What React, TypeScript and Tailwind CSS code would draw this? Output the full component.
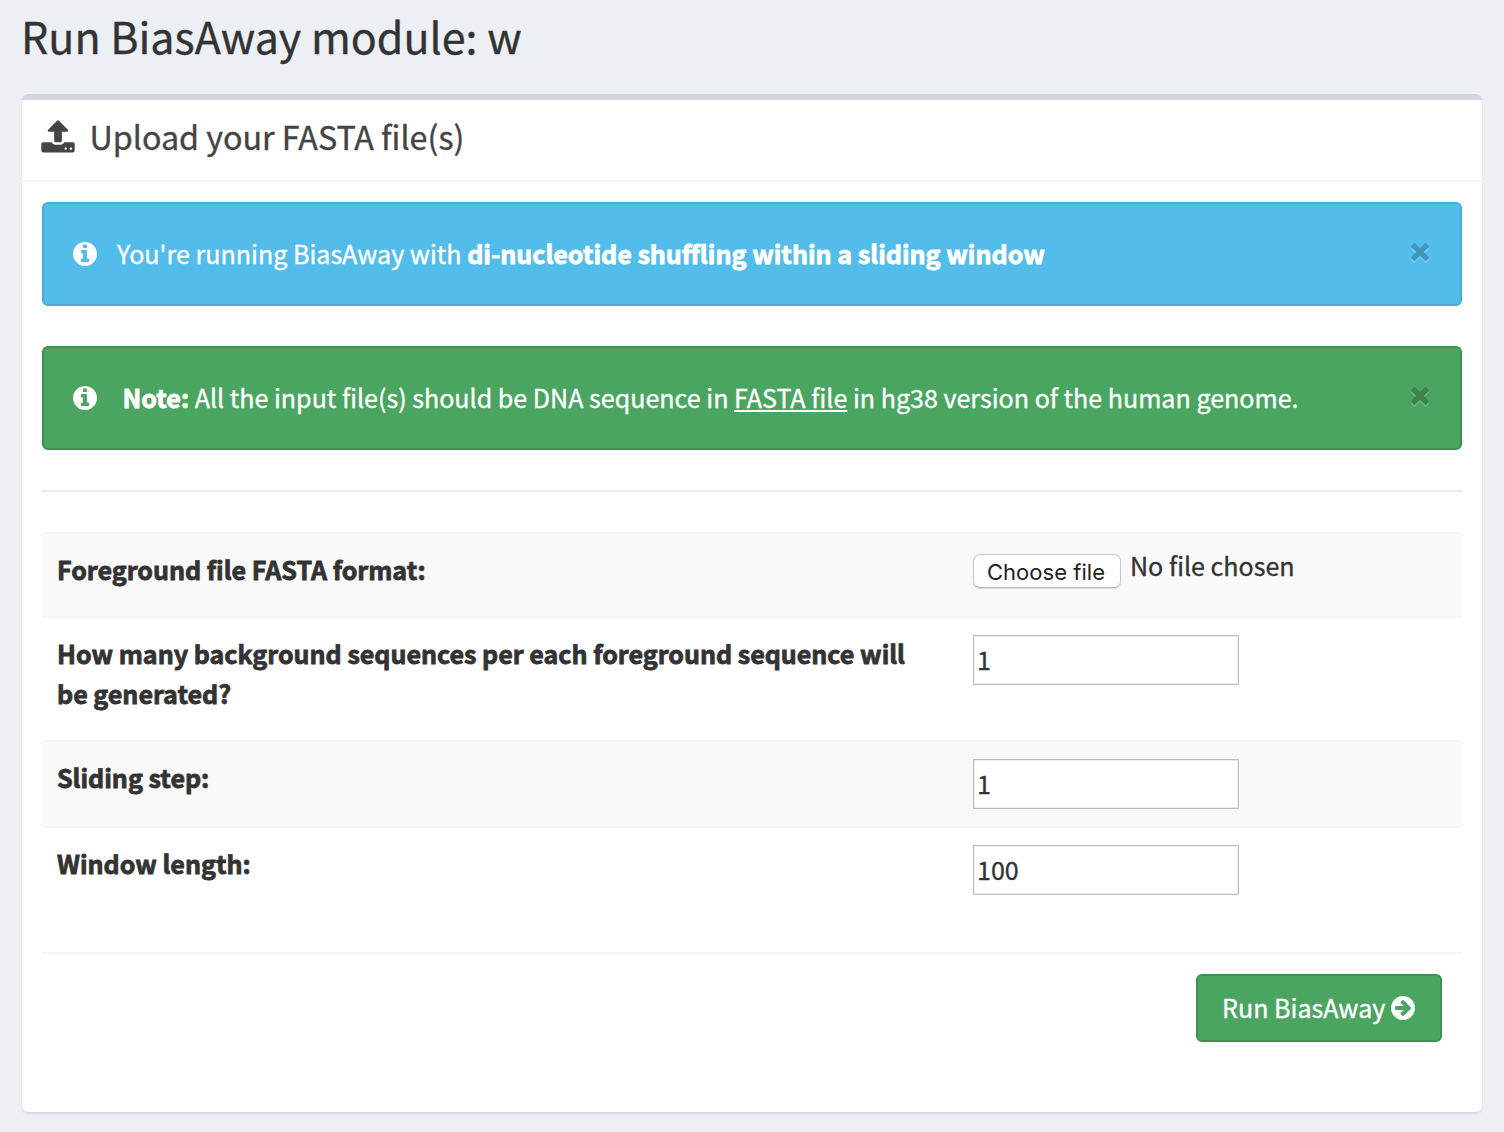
import type { ReactNode } from "react";

const CIRCLE =
  "M1664 896q0 209-103 385.5t-279.5 279.5-385.5 103-385.5-103-279.5-279.5-103-385.5 103-385.5 279.5-279.5 385.5-103 385.5 103 279.5 279.5 103 385.5z";

const ICONS = {
  upload:
    "M1344 1472q0-26-19-45t-45-19-45 19-19 45 19 45 45 19 45-19 19-45zm256 0q0-26-19-45t-45-19-45 19-19 45 19 45 45 19 45-19 19-45zm128-224v320q0 40-28 68t-68 28h-1472q-40 0-68-28t-28-68v-320q0-40 28-68t68-28h427q21 56 70.5 92t110.5 36h256q61 0 110.5-36t70.5-92h427q40 0 68 28t28 68zm-325-648q-17 40-59 40h-256v448q0 26-19 45t-45 19h-256q-26 0-45-19t-19-45v-448h-256q-42 0-59-40-17-39 14-69l448-448q18-19 45-19t45 19l448 448q31 30 14 69z",
  info:
    "M1152 1376v-160q0-14-9-23t-23-9h-96v-512q0-14-9-23t-23-9h-320q-14 0-23 9t-9 23v160q0 14 9 23t23 9h96v320h-96q-14 0-23 9t-9 23v160q0 14 9 23t23 9h448q14 0 23-9t9-23zm-128-896v-160q0-14-9-23t-23-9h-192q-14 0-23 9t-9 23v160q0 14 9 23t23 9h192q14 0 23-9t9-23z" +
    CIRCLE,
  arrow:
    "M1413 896q0-27-18-45l-91-91-362-362q-18-18-45-18t-45 18l-91 91q-18 18-18 45t18 45l189 189h-502q-26 0-45 19t-19 45v128q0 26 19 45t45 19h502l-189 189q-18 18-18 45t18 45l91 91q18 18 45 18t45-18l362-362 91-91q18-18 18-45z" +
    CIRCLE,
};

function Icon({ name, className }: { name: keyof typeof ICONS; className: string }) {
  return (
    <svg viewBox="0 0 1792 1792" fill="currentColor" fillRule="evenodd" className={className} aria-hidden="true">
      <path d={ICONS[name]} />
    </svg>
  );
}

function Alert({ className, textClass, children }: { className: string; textClass: string; children: ReactNode }) {
  return (
    <div className={`flex h-[104px] items-center rounded-md border-2 pr-[30px] pl-[27px] text-white ${className}`}>
      <Icon name="info" className="size-7 shrink-0" />
      <p className={`mb-0.5 whitespace-nowrap leading-10 ${textClass}`}>{children}</p>
      <button aria-label="Close" className="mb-0.5 ml-auto opacity-20">
        <svg viewBox="0 0 20 22" className="h-[22px] w-5" fill="none" strokeWidth="5.2">
          <path d="M2.6 4.6 17.4 19.4M17.4 4.6 2.6 19.4" stroke="#fff" />
          <path d="M2.6 2.6 17.4 17.4M17.4 2.6 2.6 17.4" stroke="#000" />
        </svg>
      </button>
    </div>
  );
}

function Row({ label, className, children }: { label: string; className: string; children: ReactNode }) {
  return (
    <div className={`flex border-t-2 border-[#f4f4f4] px-[15px] ${className}`}>
      <label className="mt-[15px] w-[916px] shrink-0 pr-10 font-bold leading-10 tracking-[-0.015px] [-webkit-text-stroke:0.8px_currentColor]">
        {label}
      </label>
      {children}
    </div>
  );
}

function NumberInput({ value }: { value: string }) {
  return (
    <input
      defaultValue={value}
      className="mt-[17px] h-[50px] w-[266px] border border-[#bebebe] bg-white pb-0.5 pl-[3px] shadow-[inset_0_0_0_1px_#eeeeee] outline-none"
    />
  );
}

export default function App() {
  return (
    <div className="h-[1132px] overflow-hidden bg-[#ecf0f5] px-[22px] font-['Noto_Sans_CJK_SC',sans-serif] text-[25.07px] text-[#333] [-webkit-text-stroke:0.35px_currentColor]">
      <h1 className="-ml-px h-[94px] pt-[5px] text-[43px] leading-[60px] whitespace-nowrap">Run BiasAway module: w</h1>
      <section className="h-[1018px] rounded-md border-t-[6px] border-[#d2d6de] bg-white shadow-[0_2px_2px_rgba(0,0,0,0.1)]">
        <header className="flex h-[82px] items-center border-b-2 border-[#f4f4f4] pb-1.5 pl-[17.5px] text-[#444]">
          <Icon name="upload" className="size-9" />
          <h3 className="mb-0.5 ml-[14px] text-[32.25px] leading-10 whitespace-nowrap">Upload your FASTA file(s)</h3>
        </header>
        <div className="px-5 pt-5">
          <Alert className="border-[#47a9d6] bg-[#52bdeb]" textClass="ml-[18px]">
            You're running BiasAway with{" "}
            <b className="[-webkit-text-stroke:0.8px_currentColor]">di-nucleotide shuffling within a sliding window</b>
          </Alert>
          <Alert className="mt-10 border-[#3d8f54] bg-[#4aa561]" textClass="ml-[23.5px]">
            <b className="[-webkit-text-stroke:0.8px_currentColor]">Note:</b> All the input file(s) should be DNA sequence in{" "}
            <a className="underline decoration-2 underline-offset-2">FASTA file</a> in hg38 version of the human genome.
          </Alert>
          <hr className="my-10 border-t-2 border-[#eee]" />
          <div>
            <Row label="Foreground file FASTA format:" className="h-[84px] bg-[#f9f9f9]">
              <button className="mt-5 h-[34px] w-[148px] rounded-[7px] border border-[#c9c9c9] border-b-[#b5b5b5] bg-white pt-px pr-0.5 font-['Inter',sans-serif] text-[22px] tracking-[0.03px] text-[#222] shadow-[0_1px_1px_rgba(0,0,0,0.12)] [-webkit-text-stroke:0]">
                Choose file
              </button>
              <span className="mt-[11px] ml-[9px] leading-10 whitespace-nowrap">No file chosen</span>
            </Row>
            <Row
              label="How many background sequences per each foreground sequence will be generated?"
              className="h-[124px]"
            >
              <NumberInput value="1" />
            </Row>
            <Row label="Sliding step:" className="h-[86px] bg-[#f9f9f9]">
              <NumberInput value="1" />
            </Row>
            <Row label="Window length:" className="h-[126px]">
              <NumberInput value="100" />
            </Row>
          </div>
          <footer className="flex justify-end border-t-2 border-[#f4f4f4] pt-5 pr-5">
            <button className="flex h-[68px] w-[246px] items-center rounded-md border-2 border-[#3d8f54] bg-[#4aa561] pl-6 text-white whitespace-nowrap">
              Run BiasAway
              <Icon name="arrow" className="ml-1 size-7 shrink-0" />
            </button>
          </footer>
        </div>
      </section>
    </div>
  );
}
